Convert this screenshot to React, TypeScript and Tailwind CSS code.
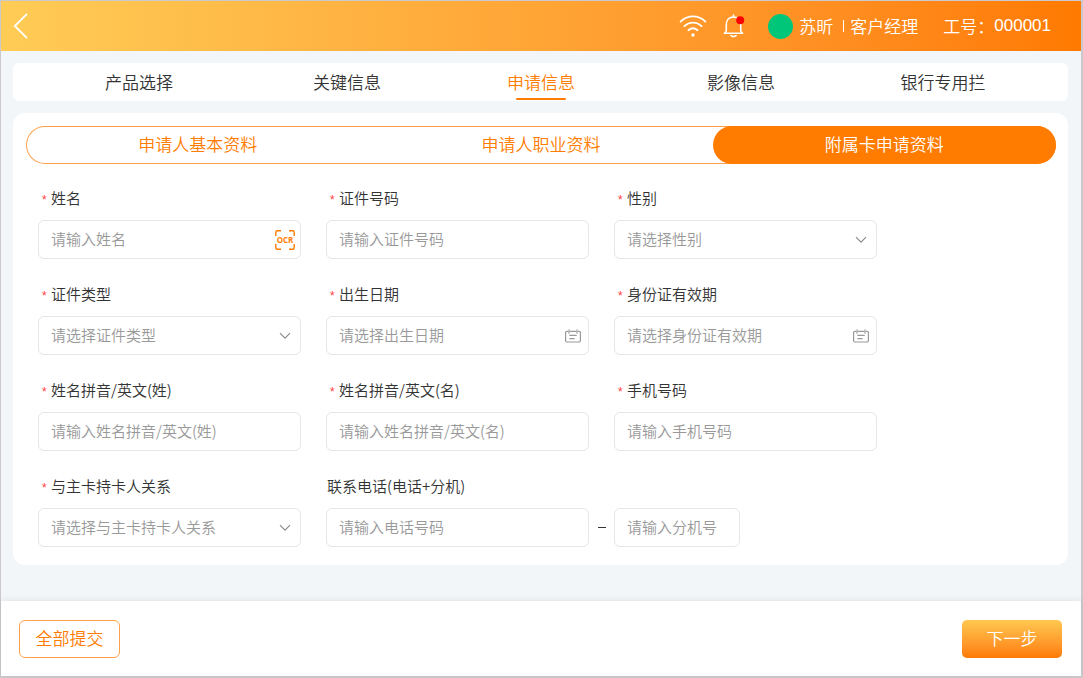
import { useState, type ReactNode } from 'react';
import { clsx } from 'clsx';

type FieldKind = 'text' | 'ocr' | 'select' | 'date';

interface Field {
  id: string;
  label: string;
  placeholder: string;
  kind: FieldKind;
}

const steps = ['产品选择', '关键信息', '申请信息', '影像信息', '银行专用拦'];

const sections = ['申请人基本资料', '申请人职业资料', '附属卡申请资料'];

const fields: Field[] = [
  { id: 'name', label: '姓名', placeholder: '请输入姓名', kind: 'ocr' },
  { id: 'idNumber', label: '证件号码', placeholder: '请输入证件号码', kind: 'text' },
  { id: 'gender', label: '性别', placeholder: '请选择性别', kind: 'select' },
  { id: 'idType', label: '证件类型', placeholder: '请选择证件类型', kind: 'select' },
  { id: 'birthday', label: '出生日期', placeholder: '请选择出生日期', kind: 'date' },
  { id: 'idExpiry', label: '身份证有效期', placeholder: '请选择身份证有效期', kind: 'date' },
  { id: 'lastName', label: '姓名拼音/英文(姓)', placeholder: '请输入姓名拼音/英文(姓)', kind: 'text' },
  { id: 'firstName', label: '姓名拼音/英文(名)', placeholder: '请输入姓名拼音/英文(名)', kind: 'text' },
  { id: 'mobile', label: '手机号码', placeholder: '请输入手机号码', kind: 'text' },
  { id: 'relation', label: '与主卡持卡人关系', placeholder: '请选择与主卡持卡人关系', kind: 'select' },
];

const controlClass =
  'block h-[39px] w-full min-w-0 appearance-none rounded-md border border-[#e6e6e6] bg-white px-3 text-[15px] text-[#999] outline-none placeholder:text-[#999] placeholder:opacity-100 focus:border-[#ff7c00]';

function BackIcon() {
  return (
    <svg width="16" height="28" viewBox="0 0 16 28" fill="none" stroke="#fff" strokeWidth="1.8">
      <path d="M14 1.8 1.8 14 14 26.2" />
    </svg>
  );
}

function WifiIcon() {
  return (
    <svg width="28" height="24" viewBox="0 0 28 24" fill="none" stroke="#fff" strokeWidth="1.8" strokeLinecap="round">
      <path d="M1.6 7.6C8.6.6 19.4.6 26.4 7.6" />
      <path d="M5.4 12.2c5-4.8 12.2-4.8 17.2 0" />
      <path d="M9.4 16.2c2.8-2.4 6.4-2.4 9.2 0" />
      <circle cx="14" cy="21" r="1.7" fill="#fff" stroke="none" />
    </svg>
  );
}

function BellIcon() {
  return (
    <svg width="22" height="24" viewBox="0 0 22 24" fill="none" stroke="#fff" strokeWidth="1.6" strokeLinecap="round" strokeLinejoin="round">
      <path d="M10.5 1v1.8" />
      <path d="M1.4 19.2h18.2c-1.3-.6-1.9-1.5-1.9-3v-5.6c0-4.6-3-7.6-7.2-7.6s-7.2 3-7.2 7.6v5.6c0 1.5-.6 2.4-1.9 3Z" />
      <path d="M8 21.6c1.3 1 3.7 1 5 0" />
      <circle cx="17.2" cy="6.2" r="4" fill="#ff0000" stroke="none" />
    </svg>
  );
}

function OcrIcon() {
  return (
    <svg width="20" height="20" viewBox="0 0 20 20" fill="none" stroke="#ff7c00" strokeWidth="1.4">
      <path d="M.8 6V2.3C.8 1.4 1.4.8 2.3.8H6M14 .8h3.7c.9 0 1.5.6 1.5 1.5V6M19.2 14v3.7c0 .9-.6 1.5-1.5 1.5H14M6 19.2H2.3c-.9 0-1.5-.6-1.5-1.5V14" />
      <text
        x="10"
        y="12.8"
        textAnchor="middle"
        fill="#ff7c00"
        stroke="none"
        className="font-['Open_Sans',sans-serif] text-[8px] font-bold"
      >
        OCR
      </text>
    </svg>
  );
}

function ChevronIcon() {
  return (
    <svg width="12" height="8" viewBox="0 0 12 8" fill="none" stroke="#888" strokeWidth="1.1">
      <path d="m1 1.2 5 5 5-5" />
    </svg>
  );
}

function CalendarIcon() {
  return (
    <svg width="16" height="14" viewBox="0 0 16 14" fill="none" stroke="#999" strokeWidth="1.2" strokeLinecap="round">
      <path d="M2.6 2.4H1.8c-.7 0-1.2.5-1.2 1.2v8.2c0 .7.5 1.2 1.2 1.2h12.4c.7 0 1.2-.5 1.2-1.2V3.6c0-.7-.5-1.2-1.2-1.2h-.8M5.4 2.4h5.2M4 .8v3.4M12 .8v3.4M4.8 6.4h6.4M4.8 9.6h4.4" />
    </svg>
  );
}

function FieldLabel({ htmlFor, children }: { htmlFor: string; children: ReactNode }) {
  return (
    <label htmlFor={htmlFor} className="flex h-5 pl-1 text-[15px] leading-5 text-[#333]">
      <span className="w-[9px] shrink-0 font-['Liberation_Sans',sans-serif] text-xs leading-6 text-[#ff3b3b]">*</span>
      {children}
    </label>
  );
}

function FormField({ id, label, placeholder, kind }: Field) {
  return (
    <div className="flex min-w-0 flex-col gap-3">
      <FieldLabel htmlFor={id}>{label}</FieldLabel>
      <div className="relative">
        {kind === 'select' ? (
          <select id={id} defaultValue="" className={controlClass}>
            <option value="">{placeholder}</option>
          </select>
        ) : (
          <input id={id} type="text" placeholder={placeholder} className={clsx(controlClass, 'pb-0.5')} />
        )}
        {kind === 'ocr' && (
          <button type="button" aria-label="OCR" className="absolute inset-y-0 right-1.5 flex items-center">
            <OcrIcon />
          </button>
        )}
        {kind === 'select' && (
          <span className="pointer-events-none absolute inset-y-0 right-2.5 flex items-center">
            <ChevronIcon />
          </span>
        )}
        {kind === 'date' && (
          <span className="pointer-events-none absolute inset-y-0 right-2 flex items-center">
            <CalendarIcon />
          </span>
        )}
      </div>
    </div>
  );
}

function Header() {
  return (
    <header className="flex h-[50px] items-center bg-linear-to-r from-[#ffcc55] to-[#ff7a00] pr-[30px] pl-3 text-[17px] text-white">
      <button type="button" aria-label="返回">
        <BackIcon />
      </button>
      <div className="ml-auto flex items-center">
        <WifiIcon />
        <button type="button" aria-label="消息" className="ml-4">
          <BellIcon />
        </button>
        <span className="ml-[23px] size-[25px] rounded-full bg-[#00c67a]" />
        <span className="ml-1.5">苏昕</span>
        <span className="ml-2.5 h-3 w-px bg-white" />
        <span className="ml-1.5">客户经理</span>
        <span className="ml-[25px]">工号：</span>
        <span className="font-['Liberation_Sans',sans-serif] leading-7">000001</span>
      </div>
    </header>
  );
}

export default function App() {
  const [step, setStep] = useState(2);
  const [section, setSection] = useState(2);

  return (
    <div className="flex min-h-screen flex-col border-t border-r-2 border-b-2 border-l border-[#cbc8ce] bg-[#f2f6f9] font-['Noto_Sans_CJK_SC',sans-serif] font-[350] text-[#333]">
      <Header />

      <main className="flex flex-1 flex-col gap-3 py-3 pr-[13px] pl-3">
        <nav className="grid h-[38px] grid-cols-[208fr_208fr_180fr_220fr_184fr] rounded-md bg-white pr-[33px] pl-[22px]">
          {steps.map((label, index) => (
            <button
              key={label}
              type="button"
              onClick={() => setStep(index)}
              className={clsx(
                'flex flex-col items-center justify-between pt-[5px] text-[17px] leading-7',
                index === step ? 'text-[#ff7c00]' : 'text-[#333]'
              )}
            >
              {label}
              <span className={clsx('mb-px h-0.5 w-[50px] rounded-full', index === step && 'bg-[#ff7c00]')} />
            </button>
          ))}
        </nav>

        <section className="rounded-xl bg-white pt-[13px] pr-3 pb-[18px] pl-[13px]">
          <div className="grid h-[38px] grid-cols-3 rounded-full ring-1 ring-[#ffa04a] ring-inset">
            {sections.map((label, index) => (
              <button
                key={label}
                type="button"
                onClick={() => setSection(index)}
                className={clsx(
                  'rounded-full pb-0.5 text-[17px]',
                  index === section ? 'bg-[#ff7c00] text-white' : 'text-[#ff7c00]'
                )}
              >
                {label}
              </button>
            ))}
          </div>

          <form className="mt-6 grid grid-cols-3 gap-[25px] pr-[179px] pl-3">
            {fields.map((field) => (
              <FormField key={field.id} {...field} />
            ))}

            <div className="col-span-2 flex min-w-0 flex-col gap-3">
              <label htmlFor="phone" className="h-5 pl-px text-[15px] leading-5">
                联系电话(电话+分机)
              </label>
              <div className="grid grid-cols-[1fr_25px_1fr] items-center">
                <input
                  id="phone"
                  type="text"
                  placeholder="请输入电话号码"
                  className={clsx(controlClass, 'pb-0.5')}
                />
                <span className="mx-auto h-px w-2 bg-[#333]" />
                <div className="w-[126px]">
                  <input
                    type="text"
                    aria-label="分机号"
                    placeholder="请输入分机号"
                    className={clsx(controlClass, 'pb-0.5')}
                  />
                </div>
              </div>
            </div>
          </form>
        </section>
      </main>

      <footer className="flex h-[75px] items-center justify-between bg-white pr-[19px] pl-[18px] text-[17px] shadow-[0_-1px_6px_rgba(0,0,0,0.08)]">
        <button type="button" className="h-[38px] w-[101px] rounded-md border border-[#ffa04a] pb-0.5 text-[#ff7c00]">
          全部提交
        </button>
        <button
          type="button"
          className="h-[38px] w-[100px] rounded-[5px] bg-linear-to-b from-[#ffc84f] to-[#ff7a00] pb-0.5 text-white"
        >
          下一步
        </button>
      </footer>
    </div>
  );
}
